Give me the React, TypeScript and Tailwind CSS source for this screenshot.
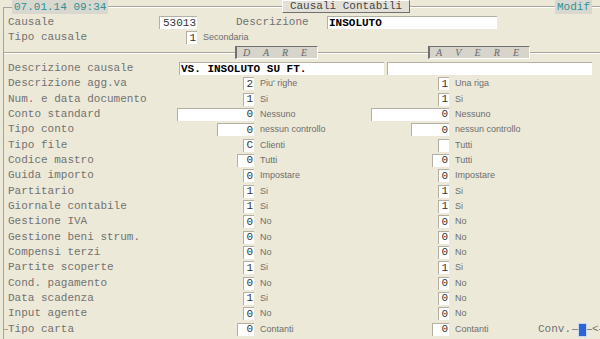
import React from 'react';

const mono = { fontFamily: '"Liberation Mono", "Courier New", monospace' };
const sans = { fontFamily: '"Liberation Sans", Arial, sans-serif' };

type Row = {
  label: string;
  l: string;
  ld: string;
  lw: number;
  r: string;
  rd: string;
  rw: number;
};

const W: Record<number, string> = {
  11: 'w-[11px]',
  17: 'w-[17px]',
  37: 'w-[37px]',
  38: 'w-[38px]',
  77: 'w-[77px]',
  78: 'w-[78px]',
};

const rows: Row[] = [
  { label: 'Descrizione agg.va', l: '2', ld: "Piu' righe", lw: 11, r: '1', rd: 'Una riga', rw: 11 },
  { label: 'Num. e data documento', l: '1', ld: 'Si', lw: 11, r: '1', rd: 'Si', rw: 11 },
  { label: 'Conto standard', l: '0', ld: 'Nessuno', lw: 77, r: '0', rd: 'Nessuno', rw: 78 },
  { label: 'Tipo conto', l: '0', ld: 'nessun controllo', lw: 37, r: '0', rd: 'nessun controllo', rw: 38 },
  { label: 'Tipo file', l: 'C', ld: 'Clienti', lw: 11, r: '', rd: 'Tutti', rw: 11 },
  { label: 'Codice mastro', l: '0', ld: 'Tutti', lw: 17, r: '0', rd: 'Tutti', rw: 17 },
  { label: 'Guida importo', l: '0', ld: 'Impostare', lw: 11, r: '0', rd: 'Impostare', rw: 11 },
  { label: 'Partitario', l: '1', ld: 'Si', lw: 11, r: '1', rd: 'Si', rw: 11 },
  { label: 'Giornale contabile', l: '1', ld: 'Si', lw: 11, r: '1', rd: 'Si', rw: 11 },
  { label: 'Gestione IVA', l: '0', ld: 'No', lw: 11, r: '0', rd: 'No', rw: 11 },
  { label: 'Gestione beni strum.', l: '0', ld: 'No', lw: 11, r: '0', rd: 'No', rw: 11 },
  { label: 'Compensi terzi', l: '0', ld: 'No', lw: 11, r: '0', rd: 'No', rw: 11 },
  { label: 'Partite scoperte', l: '1', ld: 'Si', lw: 11, r: '1', rd: 'Si', rw: 11 },
  { label: 'Cond. pagamento', l: '0', ld: 'No', lw: 11, r: '0', rd: 'No', rw: 11 },
  { label: 'Data scadenza', l: '1', ld: 'Si', lw: 11, r: '0', rd: 'No', rw: 11 },
  { label: 'Input agente', l: '0', ld: 'No', lw: 11, r: '0', rd: 'No', rw: 11 },
];

function Box({ value, w }: { value: string; w: string }) {
  return (
    <div
      className={`${w} shrink-0 h-[13px] bg-white border-t border-l border-[#b4b1a4] flex items-center justify-end pr-[1px] text-[11px] leading-none text-[#333333]`}
      style={mono}
    >
      {value}
    </div>
  );
}

function Desc({ text }: { text: string }) {
  return (
    <span className="pl-[6px] text-[9px] leading-none text-[#6e6e6e] whitespace-nowrap" style={sans}>
      {text}
    </span>
  );
}

function Line({ className }: { className: string }) {
  return <div className={`${className} h-[2px] border-t border-[#a8a597] border-b border-b-white`} />;
}

function Banner({ text, className }: { text: string; className: string }) {
  return (
    <div
      className={`${className} shrink-0 h-[13px] bg-[#d6d4cb] border-t border-l-2 border-[#707070] border-b border-r border-b-white border-r-white flex items-center justify-between pl-[6px] pr-[10px] text-[10px] italic text-[#6a6a6a] leading-none`}
      style={{ fontFamily: '"Liberation Serif", "Times New Roman", serif' }}
    >
      {text.split('').map((c, i) => (
        <span key={i}>{c}</span>
      ))}
    </div>
  );
}

export default function App() {
  return (
    <div className="w-[600px] h-[339px] overflow-hidden bg-[#ece9d8] pl-[3px] select-none">
      {/* title bar */}
      <div className="flex h-[14px] items-center whitespace-nowrap">
        <div className="w-[9px] shrink-0 h-[7px] self-end border-l border-t border-[#a8a597]" />
        <div
          className="w-[96px] shrink-0 h-[14px] bg-[#d9d8d0] flex items-center pl-[2px] text-[11px] leading-none text-[#2f9191]"
          style={mono}
        >
          07.01.14 09:34
        </div>
        <Line className="flex-1 min-w-0" />
        <div
          className="w-[128px] shrink-0 h-[13px] self-start bg-[#e3e1d7] border-t border-l border-white border-b border-r border-b-[#707070] border-r-[#707070] flex items-center justify-center text-[11px] leading-none text-[#454545]"
          style={mono}
        >
          Causali Contabili
        </div>
        <Line className="w-[145px] shrink-0" />
        <div
          className="w-[37px] shrink-0 h-[14px] bg-[#d9d8d0] flex items-center justify-center text-[11px] leading-none text-[#2f9191]"
          style={mono}
        >
          Modif
        </div>
        <Line className="w-[8px] shrink-0" />
      </div>

      {/* body */}
      <div className="border-l border-[#a8a597] h-[325px] pt-[1px] text-[11px] text-[#727272]" style={mono}>
        <div className="flex h-[15px] items-center pl-[4px]">
          <span className="w-[151px] shrink-0">Causale</span>
          <Box value="53013" w="w-[38px]" />
          <span className="ml-[39px] w-[91px] shrink-0">Descrizione</span>
          <div className="w-[170px] h-[13px] bg-white border-t border-l border-[#b4b1a4] pl-[1px] text-[11px] font-bold text-black leading-[12px]">
            INSOLUTO
          </div>
        </div>
        <div className="flex h-[15px] items-center pl-[4px]">
          <span className="w-[178px] shrink-0">Tipo causale</span>
          <Box value="1" w="w-[11px]" />
          <Desc text="Secondaria" />
        </div>

        <div className="flex h-[13px] items-center mt-[1px]">
          <Line className="w-[231px] shrink-0" />
          <Banner text="DARE" className="w-[83px]" />
          <Line className="w-[110px] shrink-0" />
          <Banner text="AVERE" className="w-[102px]" />
          <Line className="flex-1" />
        </div>

        <div className="mt-[3px]">
          <div className="flex h-[15.33px] items-start pl-[4px]">
            <span className="w-[171px] shrink-0 leading-[13px]">Descrizione causale</span>
            <div className="w-[205px] shrink-0 h-[13px] bg-white border-t border-l border-[#b4b1a4] pl-[1px] text-[11px] font-bold text-black leading-[12px] whitespace-nowrap">
              VS. INSOLUTO SU FT.
            </div>
            <div className="ml-[3px] w-[205px] shrink-0 h-[13px] bg-white border-t border-l border-[#b4b1a4]" />
          </div>

          {rows.map((r) => (
            <div key={r.label} className="flex h-[15.33px] items-start pl-[4px]">
              <span className="w-[168px] shrink-0 leading-[13px] whitespace-nowrap">{r.label}</span>
              <div className="w-[78px] shrink-0 flex justify-end">
                <Box value={r.l} w={W[r.lw]} />
              </div>
              <div className="w-[117px] shrink-0 h-[13px] flex items-center">
                <Desc text={r.ld} />
              </div>
              <div className="w-[78px] shrink-0 flex justify-end">
                <Box value={r.r} w={W[r.rw]} />
              </div>
              <div className="h-[13px] flex items-center">
                <Desc text={r.rd} />
              </div>
            </div>
          ))}

          <div className="flex h-[15.33px] items-start">
            <div className="w-[4px] shrink-0 h-px mt-[6px] bg-[#a8a597]" />
            <span className="w-[168px] shrink-0 leading-[13px] whitespace-nowrap">Tipo carta</span>
            <div className="w-[78px] shrink-0 flex justify-end">
              <Box value="0" w="w-[17px]" />
            </div>
            <div className="w-[117px] shrink-0 h-[13px] flex items-center">
              <Desc text="Contanti" />
            </div>
            <div className="w-[78px] shrink-0 flex justify-end">
              <Box value="0" w="w-[17px]" />
            </div>
            <div className="w-[89px] shrink-0 h-[13px] flex items-center">
              <Desc text="Contanti" />
            </div>
            <div className="flex-1 flex items-center h-[14px]">
              <span className="leading-none">Conv.</span>
              <div className="w-[6px] h-px bg-[#8a8a8a] ml-[1px]" />
              <div className="w-[9px] h-[14px] bg-[#2d63d2] border border-[#c9d6f0]" />
              <div className="w-[5px] h-px bg-[#8a8a8a]" />
              <span className="leading-none">&lt;</span>
              <div className="flex-1 h-px bg-[#8a8a8a]" />
            </div>
          </div>
        </div>
      </div>
    </div>
  );
}
